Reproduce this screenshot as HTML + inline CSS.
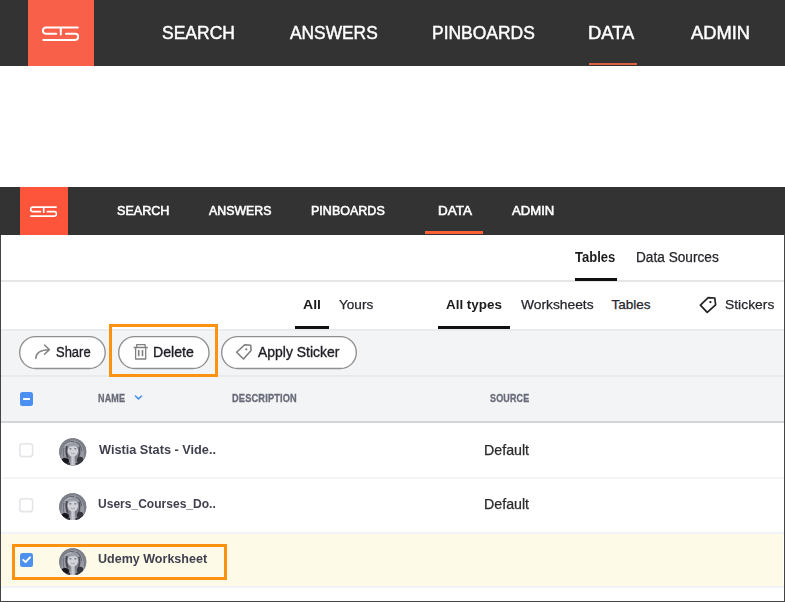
<!DOCTYPE html>
<html><head><meta charset="utf-8"><title>Data</title>
<style>
html,body{margin:0;padding:0;}
body{width:785px;height:602px;position:relative;overflow:hidden;background:#fff;font-family:"Liberation Sans",sans-serif;}
.t{position:absolute;white-space:nowrap;line-height:1;transform-origin:0 50%;display:block;}
.a{position:absolute;}
.btn{box-sizing:border-box;border:1.2px solid #909090;border-radius:17px;background:#fff;}
.cb{width:13px;height:13px;box-sizing:border-box;border:1px solid #d9dadd;border-radius:2.5px;background:#fff;}

</style></head>
<body>
<!-- top nav -->
<div class="a" style="left:0;top:0;width:785px;height:65.8px;background:#333;"></div>
<div class="a" style="left:27.5px;top:0;width:66.4px;height:65.8px;background:#f8604a;"></div>
<svg class="a" style="left:42px;top:26px;" width="37" height="16" viewBox="0 0 37 16">
  <path d="M35.8 1.5 H4 A3.15 3.15 0 0 0 4 7.8 H14.3 M18.8 1.5 V8.6 M23.9 7.8 H33.2 A3.05 3.05 0 0 1 33.2 13.9 H1.3" fill="none" stroke="#fff" stroke-width="2" stroke-linecap="round" stroke-linejoin="round"/>
</svg>
<div class="a" style="left:589px;top:62.5px;width:47.6px;height:2.9px;background:#dc6040;"></div>

<!-- second nav -->
<div class="a" style="left:0;top:187.4px;width:785px;height:47.3px;background:#333;"></div>
<div class="a" style="left:19.6px;top:187.4px;width:48.2px;height:47.3px;background:#fc553c;"></div>
<svg class="a" style="left:30.1px;top:205.5px;" width="27" height="11.7" viewBox="0 0 37 16" preserveAspectRatio="none">
  <path d="M35.8 1.5 H4 A3.15 3.15 0 0 0 4 7.8 H14.3 M18.8 1.5 V8.6 M23.9 7.8 H33.2 A3.05 3.05 0 0 1 33.2 13.9 H1.3" fill="none" stroke="#fff" stroke-width="2.3" stroke-linecap="round" stroke-linejoin="round"/>
</svg>
<div class="a" style="left:424.8px;top:231.1px;width:58px;height:2.9px;background:#fb6036;"></div>

<!-- window borders -->
<div class="a" style="left:0;top:234.5px;width:1.1px;height:368px;background:#444;"></div>
<div class="a" style="left:783.8px;top:234px;width:1.2px;height:368px;background:#444;"></div>
<div class="a" style="left:0;top:600.8px;width:785px;height:1.2px;background:#444;"></div>

<!-- tabs row 1 -->
<div class="a" style="left:1px;top:280.4px;width:783px;height:1.2px;background:#e5e6e8;"></div>
<div class="a" style="left:575px;top:278px;width:42px;height:3px;background:#111;"></div>

<!-- tabs row 2 -->
<div class="a" style="left:295px;top:326.4px;width:33.6px;height:3px;background:#111;"></div>
<div class="a" style="left:438px;top:326.4px;width:72px;height:3px;background:#111;"></div>
<svg class="a" style="left:698px;top:295px;" width="20" height="20" viewBox="698 295 20 20">
  <path d="M708.2 297.6 L714.8 298 L715.6 304.8 L707.2 312.3 L700.4 305.2 Z" fill="none" stroke="#222" stroke-width="1.7" stroke-linejoin="round"/>
  <circle cx="710.4" cy="302.1" r="1.15" fill="#222"/>
</svg>

<!-- gray toolbar area -->
<div class="a" style="left:1px;top:329.5px;width:783px;height:92.5px;background:#f3f4f6;"></div>
<div class="a" style="left:1px;top:329.4px;width:783px;height:1.2px;background:#eaebee;"></div>
<div class="a" style="left:1px;top:375.2px;width:783px;height:1.5px;background:#e9eaed;"></div>
<div class="a" style="left:1px;top:421.3px;width:783px;height:1.4px;background:#d3d5da;"></div>

<!-- buttons -->
<svg class="a" style="left:18.4px;top:334.8px;" width="88.9" height="35.2"><rect x="1.675" y="1.675" width="85.55000000000001" height="31.85" rx="15.925" fill="#fff" stroke="#8f8f8f" stroke-width="1.35"/></svg>
<svg class="a" style="left:116.7px;top:334.8px;" width="93.7" height="35.2"><rect x="1.675" y="1.675" width="90.35000000000001" height="31.85" rx="15.925" fill="#fff" stroke="#8f8f8f" stroke-width="1.35"/></svg>
<svg class="a" style="left:219.7px;top:334.8px;" width="138.0" height="35.2"><rect x="1.675" y="1.675" width="134.65" height="31.85" rx="15.925" fill="#fff" stroke="#8f8f8f" stroke-width="1.35"/></svg>
<!-- share icon -->
<svg class="a" style="left:33px;top:343px;" width="20" height="18" viewBox="33 343 20 18">
  <path d="M35.8 358.4 C36 353 40 349.8 49 349.7 M44.5 345 L49.4 349.6 L44.5 354.3" fill="none" stroke="#858585" stroke-width="1.5" stroke-linecap="round" stroke-linejoin="round"/>
</svg>
<!-- trash icon -->
<svg class="a" style="left:132px;top:342px;" width="18" height="20" viewBox="132 342 18 20">
  <path d="M133.6 347.5 H147.8 M136.7 347.3 V344.7 H145.1 V347.3 M135.6 347.6 V359 H145.7 V347.6" fill="none" stroke="#808080" stroke-width="1.3" stroke-linejoin="round"/><path d="M138.7 350 V356.2 M142.5 350 V356.2" fill="none" stroke="#808080" stroke-width="1.6"/>
</svg>
<!-- tag icon -->
<svg class="a" style="left:234px;top:342px;" width="20" height="20" viewBox="234 342 20 20">
  <path d="M244.7 344.8 L250.7 345.2 L251.1 350.6 L243.5 359 L236.6 352.2 Z" fill="none" stroke="#7a7a7a" stroke-width="1.5" stroke-linejoin="round"/>
  <circle cx="246.3" cy="349.3" r="1.1" fill="#7a7a7a"/>
</svg>
<!-- orange highlight 1 -->
<div class="a" style="left:109px;top:324px;width:108.6px;height:53.2px;border:3px solid #fd9210;box-sizing:border-box;"></div>

<!-- header checkbox -->
<div class="a" style="left:19.8px;top:392.2px;width:13.5px;height:13.5px;background:#4b8ff0;border-radius:2.5px;"></div>
<div class="a" style="left:23.1px;top:397.5px;width:7.2px;height:2.6px;background:#fff;border-radius:0.5px;"></div>
<svg class="a" style="left:133px;top:393px;" width="12" height="9" viewBox="133 393 12 9">
  <path d="M135.4 396 L138.5 398.9 L141.6 396" fill="none" stroke="#4a90e2" stroke-width="1.6" stroke-linecap="round" stroke-linejoin="round"/>
</svg>

<!-- rows -->
<div class="a" style="left:2px;top:476.6px;width:782px;height:2px;background:#f3f5f7;"></div>
<div class="a" style="left:1.2px;top:533.6px;width:782.2px;height:53px;background:#fefae8;"></div>
<div class="a" style="left:1.2px;top:531.8px;width:782.6px;height:2px;background:#f1f3f6;"></div>
<div class="a" style="left:1.2px;top:586.3px;width:782.6px;height:1.5px;background:#f0f2f5;"></div>

<svg class="a" style="left:18.4px;top:442.2px;" width="16.4" height="16.4"><rect x="1.8" y="1.8" width="12.8" height="12.8" rx="2.6" fill="#fff" stroke="#e3e5e9" stroke-width="1.6"/></svg>
<svg class="a" style="left:18.4px;top:497.2px;" width="16.4" height="16.4"><rect x="1.8" y="1.8" width="12.8" height="12.8" rx="2.6" fill="#fff" stroke="#e3e5e9" stroke-width="1.6"/></svg>
<div class="a" style="left:19.9px;top:553px;width:13.4px;height:13.9px;background:#4d90ee;border-radius:2.5px;"></div>
<svg class="a" style="left:19.9px;top:553px;" width="14" height="14" viewBox="0 0 14 14">
  <path d="M3.2 6.9 L5.6 9.1 L10 4.3" fill="none" stroke="#fff" stroke-width="1.9" stroke-linecap="round" stroke-linejoin="round"/>
</svg>

<!-- avatars -->
<svg class="a" style="left:59.2px;top:438.2px;" width="27.5" height="27.7" viewBox="0 0 28 28"><use href="#av"/></svg>
<svg class="a" style="left:59.2px;top:492.6px;" width="27.5" height="27.7" viewBox="0 0 28 28"><use href="#av"/></svg>
<svg class="a" style="left:59.2px;top:547.8px;" width="27.5" height="27.7" viewBox="0 0 28 28"><use href="#av"/></svg>
<svg width="0" height="0" style="position:absolute">
  <defs>
    <clipPath id="cc"><circle cx="14" cy="14" r="13.8"/></clipPath>
    <filter id="bl" x="-10%" y="-10%" width="120%" height="120%"><feGaussianBlur stdDeviation="0.7"/></filter>
    <g id="av">
      <circle cx="14" cy="14" r="13.8" fill="#7b7d87"/>
      <g clip-path="url(#cc)"><g filter="url(#bl)">
        <rect x="-2" y="-2" width="32" height="32" fill="#7d7f89"/>
        <!-- hair mass -->
        <path d="M2.5 23 C1.5 10 7 2.2 14.5 2.2 C22 2.2 26.5 10 25.5 23 L19 22 L19 8 L9 8 L9 22 Z" fill="#989aa4"/>
        <path d="M7 6 C9.5 3.6 13 3 15.5 3.8" stroke="#5d5e67" stroke-width="1" fill="none"/><path d="M6.5 8 C8 5.5 11 4.6 13 5" stroke="#b4b6be" stroke-width="1.2" fill="none"/>
        <path d="M17 4 C20.5 5 22.5 8.5 23 13" stroke="#5f6069" stroke-width="1.1" fill="none"/>
        <path d="M5 10 C4 14 4.2 18 5.5 21" stroke="#6a6b75" stroke-width="1" fill="none"/>
        <!-- shadows beside face -->
        <path d="M8 8 C7 12 7.3 16 8.8 20" stroke="#44454e" stroke-width="1.8" fill="none"/>
        <path d="M20.6 9 C21.4 13 21 17 19.8 20.5" stroke="#50515a" stroke-width="1.7" fill="none"/>
        <!-- dark shoulders -->
        <ellipse cx="6.2" cy="23.6" rx="3.9" ry="3.3" fill="#15151a"/>
        <ellipse cx="21.6" cy="22.6" rx="3.4" ry="3.6" fill="#34343c"/>
        <path d="M2 28 L26 28 L26 25.4 L2 25.4 Z" fill="#33333b"/>
        <!-- neck / collar -->
        <path d="M12.2 18 L16 18 L17 28 L11.2 28 Z" fill="#b4b5bd"/><path d="M14.1 19 V28" stroke="#d8d9de" stroke-width="1"/>
        <!-- face -->
        <ellipse cx="14.1" cy="12.9" rx="5.3" ry="6" fill="#d2d3d9"/>
        <!-- fringe -->
        <path d="M8.8 9.4 C10.5 5.8 17.4 5.4 19.8 9.4 C17 7.8 12 7.8 8.8 9.4 Z" fill="#a0a2ab"/>
        <!-- eyes, mouth -->
        <ellipse cx="11.6" cy="10.9" rx="1.2" ry="0.65" fill="#5a5b64"/>
        <ellipse cx="16.6" cy="10.9" rx="1.2" ry="0.65" fill="#5a5b64"/>
        <path d="M12 15.4 Q14.1 16.6 16.2 15.4" stroke="#9a9ba3" stroke-width="0.8" fill="none"/>
      </g></g>
    </g>
  </defs>
</svg>

<!-- orange highlight 2 -->
<div class="a" style="left:11.7px;top:543.8px;width:215.6px;height:36.4px;border:3px solid #fd9210;box-sizing:border-box;"></div>

<span class="t" id="t0" style="left:161.50px;top:24.70px;font-size:17.6px;font-weight:400;color:#fff;-webkit-text-stroke:0.45px #fff;transform:scaleX(0.9951);">SEARCH</span>
<span class="t" id="t1" style="left:289.75px;top:24.70px;font-size:17.6px;font-weight:400;color:#fff;-webkit-text-stroke:0.45px #fff;transform:scaleX(0.9859);">ANSWERS</span>
<span class="t" id="t2" style="left:431.76px;top:24.70px;font-size:17.6px;font-weight:400;color:#fff;-webkit-text-stroke:0.45px #fff;transform:scaleX(0.9926);">PINBOARDS</span>
<span class="t" id="t3" style="left:588.49px;top:24.70px;font-size:17.6px;font-weight:400;color:#fff;-webkit-text-stroke:0.45px #fff;transform:scaleX(1.0451);">DATA</span>
<span class="t" id="t4" style="left:691.26px;top:24.70px;font-size:17.6px;font-weight:400;color:#fff;-webkit-text-stroke:0.45px #fff;transform:scaleX(1.0404);">ADMIN</span>
<span class="t" id="t5" style="left:116.94px;top:205.07px;font-size:12.2px;font-weight:400;color:#fff;-webkit-text-stroke:0.55px #fff;transform:scaleX(1.0312);">SEARCH</span>
<span class="t" id="t6" style="left:209.15px;top:205.07px;font-size:12.2px;font-weight:400;color:#fff;-webkit-text-stroke:0.55px #fff;transform:scaleX(1.0130);">ANSWERS</span>
<span class="t" id="t7" style="left:311.23px;top:205.07px;font-size:12.2px;font-weight:400;color:#fff;-webkit-text-stroke:0.55px #fff;transform:scaleX(1.0276);">PINBOARDS</span>
<span class="t" id="t8" style="left:438.37px;top:205.07px;font-size:12.2px;font-weight:400;color:#fff;-webkit-text-stroke:0.55px #fff;transform:scaleX(1.1041);">DATA</span>
<span class="t" id="t9" style="left:512.07px;top:205.07px;font-size:12.2px;font-weight:400;color:#fff;-webkit-text-stroke:0.55px #fff;transform:scaleX(1.0761);">ADMIN</span>
<span class="t" id="t10" style="left:575.36px;top:250.82px;font-size:13.8px;font-weight:700;color:#1c1c1c;transform:scaleX(0.9437);">Tables</span>
<span class="t" id="t11" style="left:635.81px;top:250.82px;font-size:13.8px;font-weight:400;color:#25252c;-webkit-text-stroke:0.25px #25252c;transform:scaleX(0.9897);">Data Sources</span>
<span class="t" id="t12" style="left:303.08px;top:297.60px;font-size:13.7px;font-weight:700;color:#1c1c1c;transform:scaleX(1.0312);">All</span>
<span class="t" id="t13" style="left:338.95px;top:297.77px;font-size:13.5px;font-weight:400;color:#25252c;-webkit-text-stroke:0.25px #25252c;transform:scaleX(1.0060);">Yours</span>
<span class="t" id="t14" style="left:446.21px;top:297.60px;font-size:13.7px;font-weight:700;color:#1c1c1c;transform:scaleX(0.9786);">All types</span>
<span class="t" id="t15" style="left:520.50px;top:297.77px;font-size:13.5px;font-weight:400;color:#25252c;-webkit-text-stroke:0.25px #25252c;transform:scaleX(1.0219);">Worksheets</span>
<span class="t" id="t16" style="left:611.55px;top:297.77px;font-size:13.5px;font-weight:400;color:#25252c;-webkit-text-stroke:0.25px #25252c;transform:scaleX(1.0000);">Tables</span>
<span class="t" id="t17" style="left:725.49px;top:298.00px;font-size:13.7px;font-weight:400;color:#25252c;-webkit-text-stroke:0.25px #25252c;transform:scaleX(1.0136);">Stickers</span>
<span class="t" id="t18" style="left:56.14px;top:345.15px;font-size:14px;font-weight:400;color:#1e1e26;-webkit-text-stroke:0.35px #1e1e26;transform:scaleX(0.9260);">Share</span>
<span class="t" id="t19" style="left:153.49px;top:345.15px;font-size:14px;font-weight:400;color:#1e1e26;-webkit-text-stroke:0.35px #1e1e26;transform:scaleX(1.0077);">Delete</span>
<span class="t" id="t20" style="left:258.25px;top:345.15px;font-size:14px;font-weight:400;color:#1e1e26;-webkit-text-stroke:0.35px #1e1e26;transform:scaleX(0.9963);">Apply Sticker</span>
<span class="t" id="t21" style="left:98.47px;top:393.33px;font-size:10.6px;font-weight:700;color:#686b78;-webkit-text-stroke:0.3px #686b78;letter-spacing:0.2px;transform:scaleX(0.8516);">NAME</span>
<span class="t" id="t22" style="left:231.96px;top:393.33px;font-size:10.6px;font-weight:700;color:#686b78;-webkit-text-stroke:0.3px #686b78;letter-spacing:0.2px;transform:scaleX(0.8707);">DESCRIPTION</span>
<span class="t" id="t23" style="left:489.59px;top:393.33px;font-size:10.6px;font-weight:700;color:#686b78;-webkit-text-stroke:0.3px #686b78;letter-spacing:0.2px;transform:scaleX(0.8459);">SOURCE</span>
<span class="t" id="t24" style="left:98.70px;top:442.83px;font-size:13.2px;font-weight:700;color:#40414e;transform:scaleX(0.9643);">Wistia Stats - Vide..</span>
<span class="t" id="t25" style="left:98.02px;top:497.03px;font-size:13.2px;font-weight:700;color:#40414e;transform:scaleX(0.9132);">Users_Courses_Do..</span>
<span class="t" id="t26" style="left:97.99px;top:551.63px;font-size:13.2px;font-weight:700;color:#40414e;transform:scaleX(0.9500);">Udemy Worksheet</span>
<span class="t" id="t27" style="left:483.90px;top:442.98px;font-size:14.2px;font-weight:400;color:#2a2a2a;-webkit-text-stroke:0.25px #2a2a2a;transform:scaleX(1.0023);">Default</span>
<span class="t" id="t28" style="left:483.90px;top:497.28px;font-size:14.2px;font-weight:400;color:#2a2a2a;-webkit-text-stroke:0.25px #2a2a2a;transform:scaleX(1.0023);">Default</span>
</body></html>
